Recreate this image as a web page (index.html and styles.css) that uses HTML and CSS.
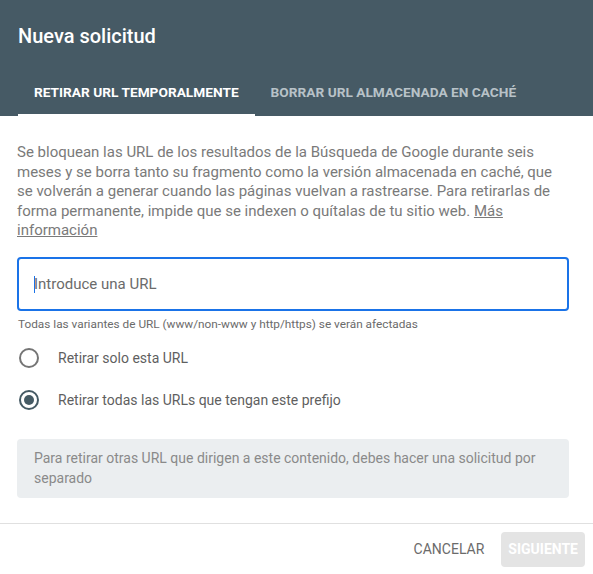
FILE: index.html
```html
<!DOCTYPE html>
<html lang="es">
<head>
  <meta charset="UTF-8">
  <meta name="viewport" content="width=device-width, initial-scale=1.0">
  <title>Nueva solicitud</title>
  <link rel="stylesheet" href="styles.css">
</head>
<body>

  <div class="dialog">
    <div class="header">
      <h2>Nueva solicitud</h2>
      <div class="tabs">
        <div class="tab active">Retirar URL temporalmente</div>
        <div class="tab">Borrar URL almacenada en caché</div>
      </div>
    </div>

    <div class="content">
      <p class="intro">Se bloquean las URL de los resultados de la Búsqueda de Google durante seis meses y se borra tanto su fragmento como la versión almacenada en caché, que se volverán a generar cuando las páginas vuelvan a rastrearse. Para retirarlas de forma permanente, impide que se indexen o quítalas de tu sitio web. <a href="#">Más información</a></p>

      <div class="url-field">
        <span class="caret"></span>
        <input type="text" placeholder="Introduce una URL">
      </div>
      <p class="hint">Todas las variantes de URL (www/non-www y http/https) se verán afectadas</p>

      <label class="radio">
        <input type="radio" name="scope">
        <span class="dot"></span>
        Retirar solo esta URL
      </label>
      <label class="radio">
        <input type="radio" name="scope" checked>
        <span class="dot"></span>
        Retirar todas las URLs que tengan este prefijo
      </label>

      <div class="notice">Para retirar otras URL que dirigen a este contenido, debes hacer una solicitud por separado</div>
    </div>

    <div class="actions">
      <button class="btn-text">Cancelar</button>
      <button class="btn-next" disabled>Siguiente</button>
    </div>
  </div>

</body>
</html>
```

FILE: styles.css
```css
body {
  margin: 0;
  font-family: Roboto, "Liberation Sans", Arial, sans-serif;
  background: #fff;
}
.dialog {
  width: 593px;
  height: 574px;
  background: #fff;
}
.header {
  background-color: #465a65;
  padding: 24px 0 0 18px;
}
.header h2 {
  margin: 0;
  font-size: 20px;
  line-height: 24px;
  font-weight: 500;
  color: #fff;
}
.tabs {
  display: flex;
  margin-top: 20px;
}
.tab {
  height: 48px;
  padding: 0 16px;
  display: flex;
  align-items: center;
  font-size: 13.7px;
  font-weight: 700;
  text-transform: uppercase;
  color: #b8c2c8;
  box-sizing: border-box;
}
.tab.active {
  color: #fff;
  border-bottom: 2px solid #fff;
  padding-top: 2px;
}
.content {
  padding: 27px 24px 0 17px;
}
.intro {
  margin: 0;
  font-size: 15px;
  line-height: 19.5px;
  color: #7a7a7a;
}
.intro a {
  color: #7a7a7a;
}
.url-field {
  position: relative;
  margin-top: 16px;
  height: 54px;
  border: 2px solid #1a73e8;
  border-radius: 4px;
  box-sizing: border-box;
}
.url-field input {
  width: 100%;
  height: 100%;
  border: none;
  outline: none;
  background: transparent;
  padding: 0 0 0 15px;
  box-sizing: border-box;
  font-family: inherit;
  font-size: 15px;
  color: #333;
}
.url-field input::placeholder {
  color: #6b6b6b;
}
.caret {
  position: absolute;
  left: 15px;
  top: 17px;
  width: 1px;
  height: 17px;
  background: #1a73e8;
}
.hint {
  margin: 6px 0 0 1px;
  font-size: 11.8px;
  line-height: 14px;
  color: #6b6b6b;
}
.radio {
  display: flex;
  align-items: center;
  height: 42px;
  font-size: 14px;
  color: #5f5f5f;
  cursor: pointer;
}
.radio:first-of-type {
  margin-top: 6px;
}
.radio input {
  display: none;
}
.dot {
  width: 20px;
  height: 20px;
  margin: 0 19px 0 2px;
  border: 2px solid #757575;
  border-radius: 50%;
  box-sizing: border-box;
  display: flex;
  align-items: center;
  justify-content: center;
}
.radio input:checked + .dot {
  border-color: #455a64;
}
.radio input:checked + .dot::after {
  content: "";
  width: 10px;
  height: 10px;
  border-radius: 50%;
  background: #455a64;
}
.notice {
  margin-top: 18px;
  background: #ebeef0;
  border-radius: 4px;
  padding: 9px 17px 10px;
  font-size: 14px;
  line-height: 20px;
  color: #8a8a8a;
}
.actions {
  margin-top: 25px;
  border-top: 1px solid #e0e0e0;
  display: flex;
  justify-content: flex-end;
  align-items: center;
  gap: 17px;
  padding: 8px 8px 0 0;
}
.actions button {
  font-family: inherit;
  font-size: 14px;
  text-transform: uppercase;
  border: none;
  border-radius: 4px;
  height: 35px;
}
.btn-text {
  background: none;
  color: #6b6b6b;
  padding: 0;
}
.btn-next {
  background: #e4e4e4;
  color: #fff;
  font-weight: 700;
  padding: 0 7px;
}
```
